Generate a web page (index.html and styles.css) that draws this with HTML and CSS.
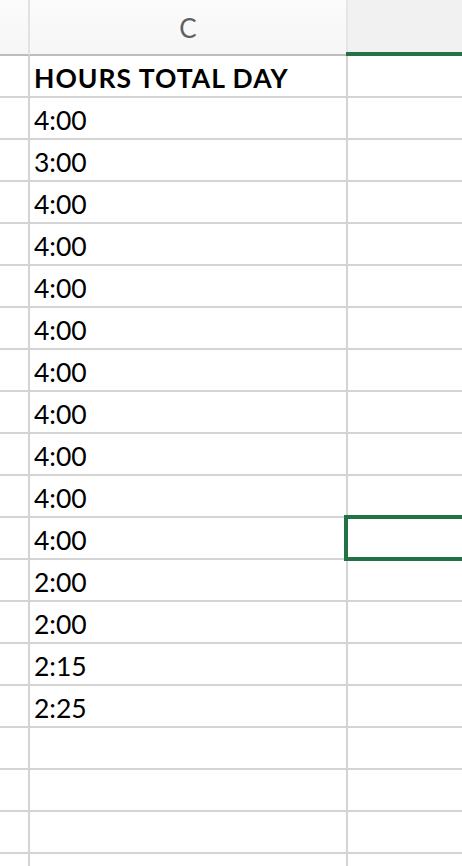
FILE: index.html
```html
<!DOCTYPE html>
<html>
<head>
<meta charset="utf-8">
<link rel="stylesheet" href="styles.css">
</head>
<body>
<div class="sheet">
  <div class="hdr hdr-row"></div>
  <div class="hdr hdr-col">C</div>
  <div class="hdr hdr-col hdr-sel"></div>

  <div class="rh"></div><div class="cell bold">HOURS TOTAL DAY</div><div class="cell last"></div>
  <div class="rh"></div><div class="cell">4:00</div><div class="cell last"></div>
  <div class="rh"></div><div class="cell">3:00</div><div class="cell last"></div>
  <div class="rh"></div><div class="cell">4:00</div><div class="cell last"></div>
  <div class="rh"></div><div class="cell">4:00</div><div class="cell last"></div>
  <div class="rh"></div><div class="cell">4:00</div><div class="cell last"></div>
  <div class="rh"></div><div class="cell">4:00</div><div class="cell last"></div>
  <div class="rh"></div><div class="cell">4:00</div><div class="cell last"></div>
  <div class="rh"></div><div class="cell">4:00</div><div class="cell last"></div>
  <div class="rh"></div><div class="cell">4:00</div><div class="cell last"></div>
  <div class="rh"></div><div class="cell">4:00</div><div class="cell last"></div>
  <div class="rh"></div><div class="cell">4:00</div><div class="cell last selected"></div>
  <div class="rh"></div><div class="cell">2:00</div><div class="cell last"></div>
  <div class="rh"></div><div class="cell">2:00</div><div class="cell last"></div>
  <div class="rh"></div><div class="cell">2:15</div><div class="cell last"></div>
  <div class="rh"></div><div class="cell">2:25</div><div class="cell last"></div>
  <div class="rh"></div><div class="cell"></div><div class="cell last"></div>
  <div class="rh"></div><div class="cell"></div><div class="cell last"></div>
  <div class="rh"></div><div class="cell"></div><div class="cell last"></div>
  <div class="rh"></div><div class="cell"></div><div class="cell last"></div>
</div>
</body>
</html>
```

FILE: styles.css
```css
html, body {
  margin: 0;
  padding: 0;
  background: #ffffff;
  overflow: hidden;
}

.sheet {
  display: grid;
  grid-template-columns: 30px 318px 1fr;
  grid-auto-rows: 42px;
  grid-template-rows: 56px;
  height: 866px;
  overflow: hidden;
  font-family: Lato, "Open Sans", sans-serif;
  font-size: 26.5px;
  color: #000;
}

.hdr {
  box-sizing: border-box;
  background: linear-gradient(#fbfbfb, #f6f6f6);
  border-bottom: 2px solid #bdbdbd;
}

.hdr-row {
  border-right: 2px solid #e2e2e2;
}

.hdr-col {
  border-right: 2px solid #e6e6e6;
  color: #5f5f5f;
  text-align: center;
  line-height: 56px;
  font-size: 26px;
}

.hdr-sel {
  position: relative;
  background: #f1f1f1;
  border-right: none;
  border-bottom: 4px solid #217346;
}

.hdr-sel::before {
  content: "";
  position: absolute;
  left: -2px;
  bottom: -4px;
  width: 2px;
  height: 4px;
  background: #217346;
}

.rh {
  box-sizing: border-box;
  border-right: 2px solid #d4d4d4;
  border-bottom: 2px solid #d4d4d4;
}

.cell {
  box-sizing: border-box;
  border-right: 2px solid #d4d4d4;
  border-bottom: 2px solid #d4d4d4;
  padding-left: 4px;
  padding-top: 4px;
  line-height: 36px;
  white-space: nowrap;
}

.cell.last {
  border-right: none;
}

.bold {
  font-weight: 700;
  letter-spacing: 1px;
}

.selected {
  position: relative;
}

.selected::after {
  content: "";
  position: absolute;
  left: -4px;
  top: -3px;
  right: -10px;
  bottom: -3px;
  border: 4px solid #217346;
}
```
